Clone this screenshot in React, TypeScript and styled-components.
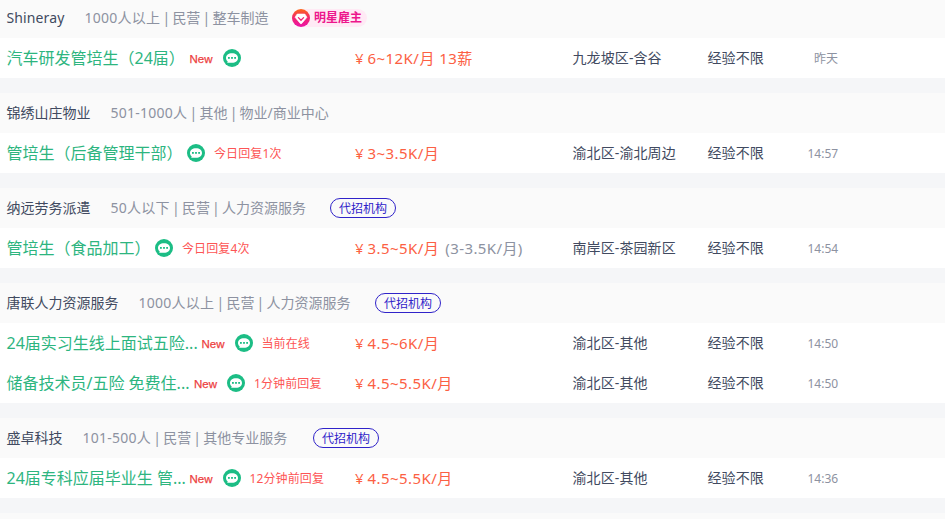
import React from 'react';
import styled, { createGlobalStyle } from 'styled-components';

const GlobalStyle = createGlobalStyle`
  * { box-sizing: border-box; }
  body {
    margin: 0;
    background: #f5f6f8;
    font-family: "Noto Sans", "Noto Sans CJK SC", sans-serif;
    font-size: 14px;
    font-weight: 400;
    color: #414a60;
    overflow: hidden;
  }
`;

const JobList = styled.main`
  display: flex;
  flex-direction: column;
  gap: 15px;
  height: 519px;
  overflow: hidden;
`;

const Company = styled.section<{ $clipped?: boolean }>`
  flex: none;
  margin-top: ${(p) => (p.$clipped ? '-2px' : '0')};
`;

const CompanyHeader = styled.header`
  display: flex;
  align-items: center;
  height: 40px;
  padding-left: 6.5px;
  background: #fafafa;
  white-space: nowrap;
`;

const CompanyName = styled.span<{ $spacing?: number }>`
  margin-right: 20px;
  line-height: 20px;
  letter-spacing: ${(p) => p.$spacing ?? 0}px;
`;

const CompanyMeta = styled.span<{ $width: number }>`
  width: ${(p) => p.$width}px;
  margin-right: 24px;
  color: #8d92a1;
  line-height: 20px;
  word-spacing: -1.45px;
`;

const Headcount = styled.span`
  letter-spacing: 0.25px;
`;

const AgencyBadge = styled.span`
  display: flex;
  align-items: center;
  justify-content: center;
  width: 66px;
  height: 20px;
  padding-top: 1px;
  border: 1px solid #3023c9;
  border-radius: 10px;
  color: #3023c9;
  font-size: 12px;
  line-height: 18px;
`;

const StarBadge = styled.span`
  display: flex;
  align-items: center;
  width: 75px;
  height: 18px;
  border-radius: 9px;
  background: #ffeaf5;
  color: #ed168c;
  font-size: 12px;
  font-weight: 700;
  line-height: 18px;

  svg { flex: none; margin-right: 4px; }
`;

const JobRow = styled.div`
  display: grid;
  grid-template-columns: 348.5px 217.5px 135px 100px 60px;
  align-items: center;
  height: 40px;
  padding-left: 6.5px;
  background: #fff;
  white-space: nowrap;
`;

const TitleCell = styled.div`
  display: flex;
  align-items: center;
`;

const JobTitle = styled.span<{ $width: number }>`
  width: ${(p) => p.$width}px;
  color: #2db57f;
  font-size: 16px;
  line-height: 24px;
`;

const NewTag = styled.span`
  width: 25px;
  margin-right: 8px;
  padding-top: 1px;
  color: #ed4141;
  font: 400 11.5px/16px "Liberation Sans", Arial, sans-serif;
  -webkit-text-stroke: 0.25px #ed4141;
`;

const Reply = styled.span`
  margin-left: 9px;
  padding-top: 2px;
  color: #fd5555;
  font-size: 12px;
  line-height: 18px;
  letter-spacing: 0.12px;
`;

const Salary = styled.div`
  display: flex;
  align-items: center;
  color: #fc6043;
  font-size: 15px;
  line-height: 22px;
`;

const Yen = styled.span`
  width: 12.5px;
`;

const Amount = styled.span`
  letter-spacing: 0.45px;
`;

const BaseSalary = styled.span`
  margin-left: 6px;
  color: #8d92a1;
  letter-spacing: 0.4px;
`;

const Cell = styled.span`
  line-height: 20px;
  letter-spacing: 0.1px;
`;

const Time = styled.span<{ $indent: boolean }>`
  padding: 1px 0 0 ${(p) => (p.$indent ? '6.5px' : '0')};
  color: #8d92a1;
  font-size: 12px;
  line-height: 18px;
`;

const ChatIcon = () => (
  <svg width="18" height="18" viewBox="0 0 18 18">
    <circle cx="9" cy="9" r="9" fill="#1cbd85" />
    <path d="M9 4.200c3.600 0 6 1.900 6 4.800s-2.400 4.800-6 4.800H4.200l.5-1.500C3.500 11.500 3 10.400 3 9c0-2.900 2.400-4.800 6-4.800Z" fill="#fff" />
    <g fill="#1cbd85">
      <rect x="5" y="8" width="1.800" height="1.800" />
      <rect x="8.100" y="8" width="1.800" height="1.800" />
      <rect x="11.200" y="8" width="1.800" height="1.800" />
    </g>
  </svg>
);

const StarIcon = () => (
  <svg width="18" height="18" viewBox="0 0 18 18">
    <defs>
      <linearGradient id="star-fill" x1="0" y1="0" x2="0" y2="1">
        <stop offset="0" stopColor="#fd6a16" />
        <stop offset="0.450" stopColor="#f32869" />
        <stop offset="1" stopColor="#eb13aa" />
      </linearGradient>
    </defs>
    <circle cx="9" cy="9" r="9" fill="url(#star-fill)" />
    <path d="M5.200 5h7.600L15 8.200 9.800 14.400Q9 15.200 8.200 14.400L3 8.200Z" fill="#fff" stroke="#fff" strokeLinejoin="round" strokeWidth=".6" />
    <path d="M6.400 8.600 9 11.300l2.600-2.700" fill="none" stroke="#ef2475" strokeWidth="1.300" strokeLinecap="round" />
  </svg>
);

interface Job {
  title: string;
  titleWidth: number;
  isNew?: boolean;
  reply?: string;
  salary: string;
  base?: string;
  area: string;
  time: string;
}

interface CompanyInfo {
  name: string;
  nameSpacing?: number;
  headcount: string;
  industry: string;
  metaWidth: number;
  badge?: 'star' | 'agency';
  jobs: Job[];
}

const companies: CompanyInfo[] = [
  {
    name: 'Shineray', nameSpacing: 0.12, headcount: '1000人以上', industry: '民营 | 整车制造', metaWidth: 183.5, badge: 'star',
    jobs: [{ title: '汽车研发管培生（24届）', titleWidth: 183, isNew: true, salary: '6~12K/月 13薪', area: '九龙坡区-含谷', time: '昨天' }],
  },
  {
    name: '锦绣山庄物业', headcount: '501-1000人', industry: '其他 | 物业/商业中心', metaWidth: 220,
    jobs: [{ title: '管培生（后备管理干部）', titleWidth: 180.5, reply: '今日回复1次', salary: '3~3.5K/月', area: '渝北区-渝北周边', time: '14:57' }],
  },
  {
    name: '纳远劳务派遣', headcount: '50人以下', industry: '民营 | 人力资源服务', metaWidth: 195.5, badge: 'agency',
    jobs: [{ title: '管培生（食品加工）', titleWidth: 148.5, reply: '今日回复4次', salary: '3.5~5K/月', base: '(3-3.5K/月)', area: '南岸区-茶园新区', time: '14:54' }],
  },
  {
    name: '唐联人力资源服务', headcount: '1000人以上', industry: '民营 | 人力资源服务', metaWidth: 212.5, badge: 'agency',
    jobs: [
      { title: '24届实习生线上面试五险...', titleWidth: 195, isNew: true, reply: '当前在线', salary: '4.5~6K/月', area: '渝北区-其他', time: '14:50' },
      { title: '储备技术员/五险 免费住...', titleWidth: 187.5, isNew: true, reply: '1分钟前回复', salary: '4.5~5.5K/月', area: '渝北区-其他', time: '14:50' },
    ],
  },
  {
    name: '盛卓科技', headcount: '101-500人', industry: '民营 | 其他专业服务', metaWidth: 206.5, badge: 'agency',
    jobs: [{ title: '24届专科应届毕业生 管...', titleWidth: 183, isNew: true, reply: '12分钟前回复', salary: '4.5~5.5K/月', area: '渝北区-其他', time: '14:36' }],
  },
];

export default function App() {
  return (
    <>
      <GlobalStyle />
      <JobList>
        {companies.map((company, index) => (
          <Company key={company.name} $clipped={index === 0}>
            <CompanyHeader>
              <CompanyName $spacing={company.nameSpacing}>{company.name}</CompanyName>
              <CompanyMeta $width={company.metaWidth}>
                <Headcount>{company.headcount}</Headcount> | {company.industry}
              </CompanyMeta>
              {company.badge === 'star' && <StarBadge><StarIcon />明星雇主</StarBadge>}
              {company.badge === 'agency' && <AgencyBadge>代招机构</AgencyBadge>}
            </CompanyHeader>
            {company.jobs.map((job) => (
              <JobRow key={job.title}>
                <TitleCell>
                  <JobTitle $width={job.titleWidth}>{job.title}</JobTitle>
                  {job.isNew && <NewTag>New</NewTag>}
                  <ChatIcon />
                  {job.reply && <Reply>{job.reply}</Reply>}
                </TitleCell>
                <Salary>
                  <Yen>¥</Yen>
                  <Amount>{job.salary}</Amount>
                  {job.base && <BaseSalary>{job.base}</BaseSalary>}
                </Salary>
                <Cell>{job.area}</Cell>
                <Cell>经验不限</Cell>
                <Time $indent={!job.time.includes(':')}>{job.time}</Time>
              </JobRow>
            ))}
          </Company>
        ))}
        <Company>
          <CompanyHeader />
        </Company>
      </JobList>
    </>
  );
}
